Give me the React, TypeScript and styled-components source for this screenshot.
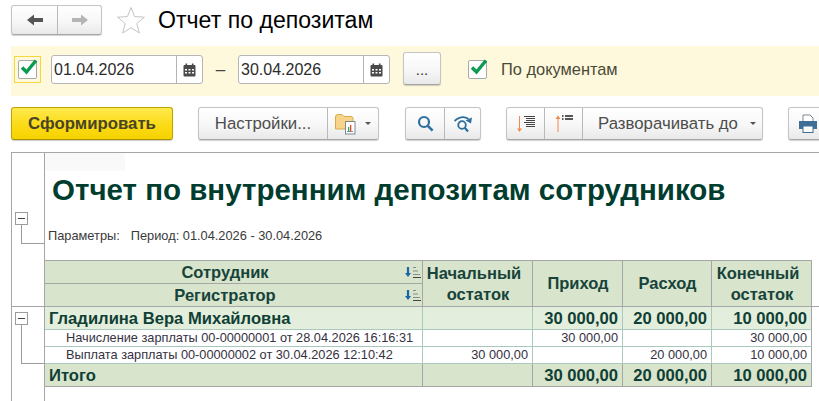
import { Fragment } from 'react'
import styled, { createGlobalStyle } from 'styled-components'

const GlobalStyle = createGlobalStyle`
  html, body {
    margin: 0;
    background: #fff;
  }
  body {
    font-family: 'Liberation Sans', Arial, sans-serif;
  }
  * {
    box-sizing: border-box;
  }
`

const Page = styled.div`
  width: 819px;
  height: 401px;
  overflow: hidden;
  display: flex;
  flex-direction: column;
`

const Header = styled.div`
  display: flex;
  align-items: center;
  height: 30px;
  margin: 5px 0 0 11px;
`

const buttonFace = `
  background: linear-gradient(#ffffff, #f7f7f7 55%, #e9e9e9);
  border: 1px solid #c4c4c4;
  border-bottom-color: #a6a6a6;
  border-radius: 3px;
  box-shadow: 0 1px 1px rgba(0, 0, 0, 0.18);
`

const ButtonGroup = styled.div<{ $width: number; $left?: number }>`
  ${buttonFace}
  display: flex;
  flex: none;
  width: ${({ $width }) => $width}px;
  height: 33px;
  margin-left: ${({ $left }) => $left ?? 0}px;
`

const NavGroup = styled(ButtonGroup)`
  height: 30px;
`

const Segment = styled.div<{ $width?: number; $pad?: number }>`
  display: flex;
  align-items: center;
  justify-content: center;
  flex: ${({ $width }) => ($width ? `0 0 ${$width}px` : '1')};
  min-width: 0;
  padding-left: ${({ $pad }) => $pad ?? 0}px;
  color: #4d4d4d;
  font-size: 16.8px;
  white-space: nowrap;
  & + & {
    border-left: 1px solid #b9b9b9;
  }
`

const StarWrap = styled.div`
  display: flex;
  margin-left: 14px;
`

const Title = styled.div`
  margin-left: 12px;
  font-size: 23.1px;
  color: #000;
`

const Band = styled.div`
  display: flex;
  align-items: center;
  height: 50px;
  margin: 11px 0 0 11px;
  padding-bottom: 3px;
  background: #fef8dc;
`

const FocusBox = styled.div`
  display: flex;
  align-items: center;
  justify-content: center;
  width: 27px;
  height: 27px;
  margin-left: 3px;
  border: 1px solid #f5d63c;
`

const CheckBox = styled.div<{ $left?: number }>`
  position: relative;
  flex: none;
  width: 19px;
  height: 19px;
  margin-left: ${({ $left }) => $left ?? 0}px;
  background: #fff;
  border: 1px solid #a9a9a9;
  border-radius: 2px;

  svg {
    position: absolute;
    left: 1px;
    top: -4px;
  }
`

const DateField = styled.div<{ $left: number }>`
  display: flex;
  flex: none;
  width: 152px;
  height: 29px;
  margin-left: ${({ $left }) => $left}px;
  background: #fff;
  border: 1px solid #b5b5b5;
  border-radius: 3px;
`

const DateValue = styled.div`
  flex: 1;
  padding-left: 2px;
  font-size: 16px;
  line-height: 27px;
  color: #2b2b2b;
`

const DateButton = styled.div`
  display: flex;
  align-items: center;
  justify-content: center;
  width: 26px;
  border-left: 1px solid #b5b5b5;
`

const Dash = styled.div`
  width: 35px;
  text-align: center;
  font-size: 17px;
  color: #444;
`

const DotsButton = styled.div`
  ${buttonFace}
  flex: none;
  width: 38px;
  height: 33px;
  margin: 0 0 2px 13px;
  text-align: center;
  font-size: 15px;
  line-height: 33px;
  color: #333;
`

const CheckLabel = styled.div`
  margin-left: 14px;
  font-size: 16.4px;
  color: #4a4a38;
`

const Toolbar = styled.div`
  display: flex;
  height: 33px;
  margin: 11px 0 0 11px;
`

const PrimaryButton = styled.div`
  flex: none;
  width: 162px;
  height: 33px;
  background: linear-gradient(#ffe94f, #fbdc1a 50%, #f6d200);
  border: 1px solid #bfa400;
  border-bottom-color: #a89000;
  border-radius: 3px;
  box-shadow: 0 1px 1px rgba(0, 0, 0, 0.2);
  text-align: center;
  font-size: 16.8px;
  font-weight: bold;
  line-height: 31px;
  color: #4a4424;
`

const Caret = styled.span<{ $left?: number }>`
  flex: none;
  width: 0;
  height: 0;
  margin-left: ${({ $left }) => $left ?? 9}px;
  border-left: 3px solid transparent;
  border-right: 3px solid transparent;
  border-top: 3px solid #555;
`

const Report = styled.div`
  flex: 1;
  display: flex;
  margin: 12px 0 0 11px;
  border-top: 1px solid #a6a6a6;
  border-left: 1px solid #a6a6a6;
`

const Gutter = styled.div`
  flex: none;
  width: 33px;
  border-right: 1px solid #a6a6a6;
`

const OutlineBlock = styled.div<{ $height: number; $top: number; $line: number }>`
  height: ${({ $height }) => $height}px;
  padding: ${({ $top }) => $top}px 0 0 3px;
  border-bottom: ${({ $line }) => ($line ? '1px solid #a6a6a6' : 'none')};
`

const OutlineBox = styled.div`
  position: relative;
  width: 13px;
  height: 13px;
  background: #fff;
  border: 1px solid #9c9c9c;

  &::after {
    content: '';
    position: absolute;
    left: 2px;
    right: 2px;
    top: 5px;
    height: 1px;
    background: #444;
  }
`

const OutlineLink = styled.div<{ $height: number }>`
  width: 24px;
  height: ${({ $height }) => $height}px;
  margin-left: 6px;
  border-left: 1px solid #9c9c9c;
  border-bottom: 1px solid #9c9c9c;
`

const Sheet = styled.div`
  flex: none;
  width: 767px;
`

const Faint = styled.div`
  width: 80px;
  height: 18px;
  background: #f9f9f9;
`

const ReportTitle = styled.div`
  margin: 0 0 0 7px;
  height: 40px;
  font-size: 29.5px;
  line-height: 38px;
  font-weight: bold;
  white-space: nowrap;
  color: #003d2f;
`

const Params = styled.div`
  display: flex;
  gap: 11px;
  margin: 16px 0 0 3px;
  height: 33px;
  font-size: 12.8px;
  line-height: 17px;
  white-space: nowrap;
  color: #3a3a3a;
`

const Grid = styled.div`
  display: grid;
  grid-template-columns: 378px 110px 90px 89px 100px;
  grid-template-rows: 23px 23px 23px 17px 17px 23px;
  border-top: 1px solid #a6a6a6;
`

const HeadCell = styled.div<{ $span?: boolean }>`
  display: flex;
  align-items: center;
  justify-content: center;
  grid-row: ${({ $span }) => ($span ? 'span 2' : 'auto')};
  padding: 0 1px 0 2px;
  background: #d8e4cc;
  border-right: 1px solid #a6a6a6;
  border-bottom: 1px solid #a6a6a6;
  text-align: center;
  font-size: 16.5px;
  line-height: 21px;
  font-weight: bold;
  color: #17433a;
`

const HeadLabel = styled.span`
  flex: 1;
  padding-left: 12px;
  padding-right: 14px;
`

const FirstLine = styled.span`
  display: block;
  padding-right: 8px;
`

type RowKind = 'group' | 'detail' | 'total'

const backgrounds: Record<RowKind, string> = {
  group: '#e4eedc',
  detail: '#fff',
  total: '#d8e4cc',
}

const Cell = styled.div<{ $kind: RowKind; $right?: boolean; $last?: boolean }>`
  background: ${({ $kind }) => backgrounds[$kind]};
  padding: ${({ $kind, $right }) =>
    $right ? '0 4px 0 0' : $kind === 'detail' ? '0 0 0 21px' : '0 0 0 4px'};
  border-right: 1px solid ${({ $kind, $last }) => ($kind === 'total' || $last ? '#a6a6a6' : '#a9c9be')};
  border-bottom: 1px solid ${({ $kind }) => ($kind === 'total' ? '#a6a6a6' : '#a9c9be')};
  text-align: ${({ $right }) => ($right ? 'right' : 'left')};
  white-space: nowrap;
  font-size: ${({ $kind }) => ($kind === 'detail' ? '12.75px' : '16.6px')};
  line-height: ${({ $kind }) => ($kind === 'detail' ? '16px' : '24px')};
  font-weight: ${({ $kind }) => ($kind === 'detail' ? 'normal' : 'bold')};
  color: ${({ $kind }) => ($kind === 'detail' ? '#35313f' : '#0f3f35')};
`

const RightEdge = styled.div`
  flex: 1;
  height: 154px;
  border-bottom: 1px solid #a6a6a6;
`

const BackIcon = ({ color }: { color: string }) => (
  <svg width="18" height="14" viewBox="0 0 18 14">
    <path d="M1 7 L8 1.5 V5 H17 V9 H8 V12.5 Z" fill={color} />
  </svg>
)

const ForwardIcon = ({ color }: { color: string }) => (
  <svg width="18" height="14" viewBox="0 0 18 14">
    <path d="M17 7 L10 1.5 V5 H1 V9 H10 V12.5 Z" fill={color} />
  </svg>
)

const StarIcon = () => (
  <svg width="30" height="28" viewBox="0 0 30 28">
    <path
      d="M15 1.5 L18.6 10.6 L28.4 11.2 L20.8 17.5 L23.3 27 L15 21.7 L6.7 27 L9.2 17.5 L1.6 11.2 L11.4 10.6 Z"
      fill="#fff"
      stroke="#c4c4c4"
      strokeWidth="1"
    />
  </svg>
)

const CheckMark = () => (
  <svg width="19" height="20" viewBox="0 0 19 20">
    <path d="M2 10.5 L6.5 15 L16 3.5" fill="none" stroke="#0b9a50" strokeWidth="3.4" />
  </svg>
)

const CalendarIcon = () => (
  <svg width="13" height="14" viewBox="0 0 13 14">
    <rect x="0.5" y="2" width="12" height="11.5" rx="1" fill="#4a4a4a" />
    <rect x="2.5" y="0.5" width="1.6" height="3" fill="#4a4a4a" />
    <rect x="8.9" y="0.5" width="1.6" height="3" fill="#4a4a4a" />
    <path
      d="M2 6h2v1.5H2zM5.5 6h2v1.5h-2zM9 6h2v1.5H9zM2 9h2v1.5H2zM5.5 9h2v1.5h-2zM9 9h2v1.5H9z"
      fill="#fff"
    />
  </svg>
)

const FolderIcon = () => (
  <svg width="21" height="22" viewBox="0 0 21 22">
    <path d="M0.5 4 Q0.5 1.5 3 1.5 H7 L9 3.5 H16 Q18 3.5 18 5.5 V16 H0.5 Z" fill="#f7d488" stroke="#d9a94e" />
    <rect x="10.5" y="8.5" width="9.5" height="12.5" fill="#fff" stroke="#7a8a94" />
    <rect x="13" y="14" width="1.3" height="4" fill="#3aa655" />
    <rect x="15" y="12" width="1.3" height="6" fill="#d9482f" />
    <rect x="12" y="18" width="6" height="1" fill="#888" />
  </svg>
)

const SearchIcon = () => (
  <svg width="17" height="17" viewBox="0 0 17 17">
    <circle cx="7" cy="7" r="5" fill="none" stroke="#2c6f9f" strokeWidth="2.2" />
    <path d="M10.6 10.6 L15.6 15.6" stroke="#2c6f9f" strokeWidth="2.6" />
  </svg>
)

const SearchNextIcon = () => (
  <svg width="20" height="18" viewBox="0 0 20 18">
    <circle cx="9" cy="10" r="3.8" fill="none" stroke="#2c6f9f" strokeWidth="1.8" />
    <path d="M11.8 12.8 L15 16.5" stroke="#2c6f9f" strokeWidth="2.2" />
    <path d="M1.5 6 Q9 -0.5 15.5 4" fill="none" stroke="#2c6f9f" strokeWidth="1.8" />
    <path d="M19 2.5 L18 8.5 L12.5 5.5 Z" fill="#2c6f9f" />
  </svg>
)

const ExpandIcon = () => (
  <svg width="18" height="18" viewBox="0 0 18 18">
    <path d="M2.5 1 V15" stroke="#f08a4b" strokeWidth="1" />
    <path d="M0 13.5 H5 L2.5 17 Z" fill="#f08a4b" />
    <path
      d="M7 1.5 H18 M9 3.5 H18 M9 5.5 H18 M7 7.5 H18 M9 9.5 H18 M9 11.5 H18"
      stroke="#444"
      strokeWidth="1"
    />
  </svg>
)

const CollapseIcon = () => (
  <svg width="18" height="18" viewBox="0 0 18 18">
    <path d="M3 3 V17" stroke="#f08a4b" strokeWidth="1" />
    <path d="M0.5 4 H5.5 L3 0.5 Z" fill="#f08a4b" />
    <path d="M7 1 H8.5 M10 1 H18 M7 4 H8.5 M10 4 H18" stroke="#222" strokeWidth="1.4" />
  </svg>
)

const PrintIcon = () => (
  <svg width="20" height="19" viewBox="0 0 20 19">
    <path d="M5 1 H12 L15 4 V8 H5 Z" fill="#fff" stroke="#7a8a94" />
    <path d="M1 7 H19 V15 H1 Z" fill="#3f6f96" />
    <rect x="5" y="12" width="10" height="6.5" fill="#fff" stroke="#3f6f96" />
  </svg>
)

const SortIconBox = styled.svg`
  flex: none;
`

const SortIcon = () => (
  <SortIconBox width="16" height="13" viewBox="0 0 16 13">
    <path d="M3 1 V8" stroke="#1a66a8" strokeWidth="2.2" />
    <path d="M0 7 H6 L3 11 Z" fill="#1a66a8" />
    <path d="M8 1.5 H11 M8 5 H13 M8 8.5 H15" stroke="#8a8a8a" strokeWidth="1" />
    <path d="M8 11.5 H16" stroke="#444" strokeWidth="1" />
  </SortIconBox>
)

const rows: { kind: RowKind; label: string; values: string[] }[] = [
  { kind: 'group', label: 'Гладилина Вера Михайловна', values: ['', '30 000,00', '20 000,00', '10 000,00'] },
  {
    kind: 'detail',
    label: 'Начисление зарплаты 00-00000001 от 28.04.2026 16:16:31',
    values: ['', '30 000,00', '', '30 000,00'],
  },
  {
    kind: 'detail',
    label: 'Выплата зарплаты 00-00000002 от 30.04.2026 12:10:42',
    values: ['30 000,00', '', '20 000,00', '10 000,00'],
  },
  { kind: 'total', label: 'Итого', values: ['', '30 000,00', '20 000,00', '10 000,00'] },
]

export default function App() {
  return (
    <Page>
      <GlobalStyle />
      <Header>
        <NavGroup $width={91}>
          <Segment $width={45}>
            <BackIcon color="#555" />
          </Segment>
          <Segment>
            <ForwardIcon color="#b5b5b5" />
          </Segment>
        </NavGroup>
        <StarWrap>
          <StarIcon />
        </StarWrap>
        <Title>Отчет по депозитам</Title>
      </Header>

      <Band>
        <FocusBox>
          <CheckBox>
            <CheckMark />
          </CheckBox>
        </FocusBox>
        <DateField $left={10}>
          <DateValue>01.04.2026</DateValue>
          <DateButton>
            <CalendarIcon />
          </DateButton>
        </DateField>
        <Dash>–</Dash>
        <DateField $left={0}>
          <DateValue>30.04.2026</DateValue>
          <DateButton>
            <CalendarIcon />
          </DateButton>
        </DateField>
        <DotsButton>...</DotsButton>
        <CheckBox $left={27}>
          <CheckMark />
        </CheckBox>
        <CheckLabel>По документам</CheckLabel>
      </Band>

      <Toolbar>
        <PrimaryButton>Сформировать</PrimaryButton>
        <ButtonGroup $width={181} $left={25}>
          <Segment $width={128}>Настройки...</Segment>
          <Segment>
            <FolderIcon />
            <Caret />
          </Segment>
        </ButtonGroup>
        <ButtonGroup $width={76} $left={26}>
          <Segment $width={38}>
            <SearchIcon />
          </Segment>
          <Segment>
            <SearchNextIcon />
          </Segment>
        </ButtonGroup>
        <ButtonGroup $width={257} $left={25}>
          <Segment $width={37}>
            <ExpandIcon />
          </Segment>
          <Segment $width={38}>
            <CollapseIcon />
          </Segment>
          <Segment $pad={9}>
            Разворачивать до
            <Caret $left={12} />
          </Segment>
        </ButtonGroup>
        <ButtonGroup $width={60} $left={25}>
          <Segment $width={38}>
            <PrintIcon />
          </Segment>
        </ButtonGroup>
      </Toolbar>

      <Report>
        <Gutter>
          <OutlineBlock $height={154} $top={59} $line={1}>
            <OutlineBox />
            <OutlineLink $height={19} />
          </OutlineBlock>
          <OutlineBlock $height={80} $top={5} $line={0}>
            <OutlineBox />
            <OutlineLink $height={39} />
          </OutlineBlock>
        </Gutter>
        <Sheet>
          <Faint />
          <ReportTitle>Отчет по внутренним депозитам сотрудников</ReportTitle>
          <Params>
            <span>Параметры:</span>
            <span>Период: 01.04.2026 - 30.04.2026</span>
          </Params>
          <Grid>
            <HeadCell>
              <HeadLabel>Сотрудник</HeadLabel>
              <SortIcon />
            </HeadCell>
            <HeadCell $span>
              <span>
                <FirstLine>Начальный</FirstLine>
                остаток
              </span>
            </HeadCell>
            <HeadCell $span>Приход</HeadCell>
            <HeadCell $span>Расход</HeadCell>
            <HeadCell $span>
              <span>
                <FirstLine>Конечный</FirstLine>
                остаток
              </span>
            </HeadCell>
            <HeadCell>
              <HeadLabel>Регистратор</HeadLabel>
              <SortIcon />
            </HeadCell>
            {rows.map((row) => (
              <Fragment key={row.label}>
                <Cell $kind={row.kind}>{row.label}</Cell>
                {row.values.map((value, i) => (
                  <Cell key={i} $kind={row.kind} $right $last={i === 3}>
                    {value}
                  </Cell>
                ))}
              </Fragment>
            ))}
          </Grid>
        </Sheet>
        <RightEdge />
      </Report>
    </Page>
  )
}
